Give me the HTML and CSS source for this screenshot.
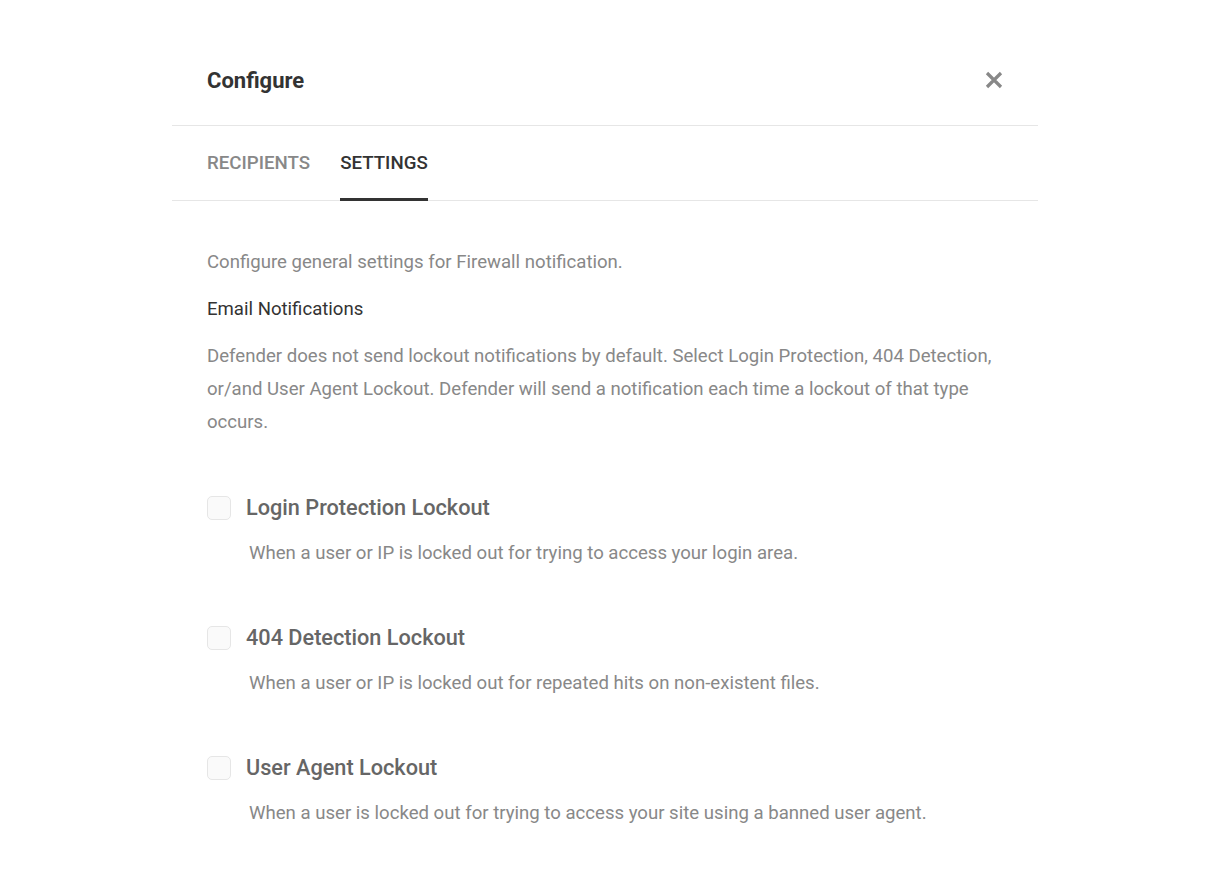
FILE: index.html
```html
<!DOCTYPE html>
<html>
<head>
<meta charset="utf-8">
<title>Configure</title>
<link rel="stylesheet" href="styles.css">
</head>
<body>

<div class="dialog">
	<div class="header">
		<h2 class="title">Configure</h2>
		<button class="close" aria-label="Close">
			<svg width="18" height="18" viewBox="0 0 18 18"><path d="M2 2L16 16M16 2L2 16" stroke="#888" stroke-width="3.2" stroke-linecap="butt"/></svg>
		</button>
	</div>

	<div class="tabs">
		<span class="tab">RECIPIENTS</span>
		<span class="tab active">SETTINGS</span>
	</div>

	<div class="content">
		<p class="intro">Configure general settings for Firewall notification.</p>
		<p class="label">Email Notifications</p>
		<p class="desc">Defender does not send lockout notifications by default. Select Login Protection, 404 Detection, or/and User Agent Lockout. Defender will send a notification each time a lockout of that type occurs.</p>

		<div class="options">
			<div class="option">
				<label class="check"><span class="box"></span><span class="name">Login Protection Lockout</span></label>
				<p class="help">When a user or IP is locked out for trying to access your login area.</p>
			</div>
			<div class="option">
				<label class="check"><span class="box"></span><span class="name">404 Detection Lockout</span></label>
				<p class="help">When a user or IP is locked out for repeated hits on non-existent files.</p>
			</div>
			<div class="option">
				<label class="check"><span class="box"></span><span class="name">User Agent Lockout</span></label>
				<p class="help">When a user is locked out for trying to access your site using a banned user agent.</p>
			</div>
		</div>
	</div>
</div>

</body>
</html>
```

FILE: styles.css
```css
body {
	margin: 0;
	font-family: Roboto, "Liberation Sans", sans-serif;
	background: #fff;
	color: #888;
}
.dialog {
	width: 866px;
	margin: 35px 0 0 172px;
}
/* header */
.header {
	display: flex;
	align-items: center;
	justify-content: space-between;
	height: 90px;
	padding: 0 35px;
	border-bottom: 1px solid #e6e6e6;
}
.title {
	margin: 0;
	font-size: 22px;
	font-weight: 700;
	color: #333;
}
.close {
	border: 0;
	background: none;
	padding: 0;
	display: flex;
	cursor: pointer;
}
/* tabs */
.tabs {
	display: flex;
	gap: 30px;
	padding: 0 35px;
	border-bottom: 1px solid #e6e6e6;
}
.tab {
	font-size: 18.7px;
	font-weight: 500;
	color: #888;
	padding-top: 3px;
	line-height: 69px;
	border-bottom: 3px solid transparent;
	margin-bottom: -1px;
}
.tab.active {
	color: #333;
	border-bottom-color: #333;
}
/* content */
.content {
	padding: 45px 35px 30px;
	font-size: 18.6px;
	line-height: 33px;
}
.content p {
	margin: 0;
}
.intro {
	margin-bottom: 14px !important;
}
.label {
	color: #333;
	margin-bottom: 14px !important;
}
.options {
	margin-top: 54px;
	display: flex;
	flex-direction: column;
	gap: 53px;
}
.check {
	display: flex;
	align-items: center;
	gap: 15px;
}
.box {
	width: 22px;
	height: 22px;
	border: 1px solid #e6e6e6;
	border-radius: 5px;
	background: #fafafa;
}
.name {
	font-size: 21.7px;
	font-weight: 500;
	color: #666;
	line-height: 30px;
}
.help {
	margin-top: 14px !important;
	padding-left: 42px;
}
```
